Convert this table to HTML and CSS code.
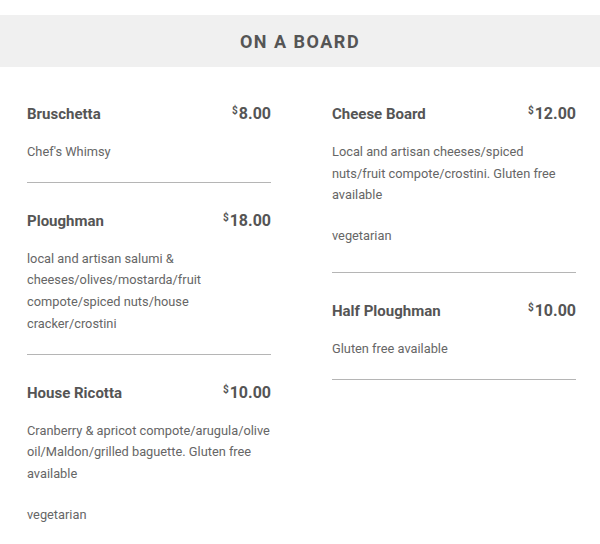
FILE: index.html
```html
<!DOCTYPE html>
<html>
<head>
<meta charset="utf-8">
<link rel="stylesheet" href="styles.css">
</head>
<body>
<div class="page">
  <h2 class="band">ON A BOARD</h2>
  <div class="menu">
    <div class="col">
      <div class="item">
        <div class="row"><span class="name">Bruschetta</span><span class="price"><sup>$</sup>8.00</span></div>
        <p class="desc">Chef's Whimsy</p>
      </div>
      <div class="item">
        <div class="row"><span class="name">Ploughman</span><span class="price"><sup>$</sup>18.00</span></div>
        <p class="desc">local and artisan salumi &amp; cheeses/olives/mostarda/fruit compote/spiced nuts/house cracker/crostini</p>
      </div>
      <div class="item last">
        <div class="row"><span class="name">House Ricotta</span><span class="price"><sup>$</sup>10.00</span></div>
        <p class="desc">Cranberry &amp; apricot compote/arugula/olive oil/Maldon/grilled baguette. Gluten free available</p>
        <p class="tag">vegetarian</p>
      </div>
    </div>
    <div class="col">
      <div class="item">
        <div class="row"><span class="name">Cheese Board</span><span class="price"><sup>$</sup>12.00</span></div>
        <p class="desc">Local and artisan cheeses/spiced nuts/fruit compote/crostini. Gluten free available</p>
        <p class="tag">vegetarian</p>
      </div>
      <div class="item">
        <div class="row"><span class="name">Half Ploughman</span><span class="price"><sup>$</sup>10.00</span></div>
        <p class="desc">Gluten free available</p>
      </div>
    </div>
  </div>
</div>
</body>
</html>
```
FILE: styles.css
```css
* { box-sizing: border-box; }
html, body { margin: 0; padding: 0; background: #fff; }
body { font-family: Roboto, "Liberation Sans", sans-serif; color: #555; }
.page { padding-top: 15px; }
.band {
  margin: 0;
  height: 52px;
  line-height: 54px;
  background: #f0f0f0;
  text-align: center;
  font-size: 18px;
  font-weight: 700;
  color: #555;
  letter-spacing: 1.5px;
}
.menu {
  display: grid;
  grid-template-columns: 244px 244px;
  column-gap: 61px;
  padding-left: 27px;
  padding-top: 9px;
}
.item {
  padding-top: 27px;
  padding-bottom: 19px;
  border-bottom: 1px solid #b5b5b5;
}
.item.last { border-bottom: none; }
.row {
  display: flex;
  justify-content: space-between;
  align-items: baseline;
  height: 22px;
  line-height: 22px;
}
.name { font-size: 15px; font-weight: 700; color: #555; }
.price { font-size: 16px; font-weight: 700; color: #555; }
.price sup { font-size: 10px; vertical-align: 5px; line-height: 0; margin-right: 1px; }
.desc {
  margin: 16px 0 0;
  font-size: 12.8px;
  line-height: 21.7px;
  color: #666;
}
.tag {
  margin: 19px 0 6px;
  font-size: 12.8px;
  line-height: 22px;
  color: #666;
}
```
